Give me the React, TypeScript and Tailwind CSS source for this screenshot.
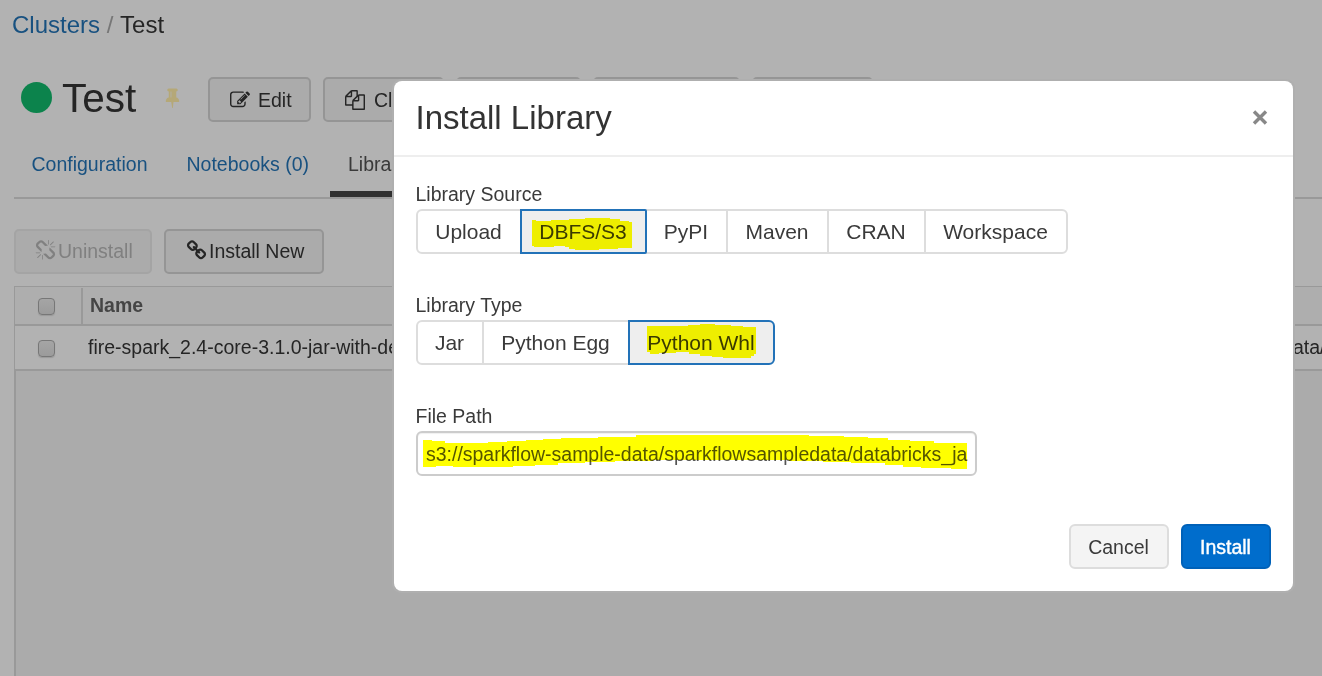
import React from "react";

const ICONS = {
  edit: "M888 1184l116-116-152-152-116 116v56h96v96h56zm440-720q-16-16-33 1l-350 350q-17 17-1 33t33-1l350-350q17-17 1-33zm80 594v190q0 119-84.5 203.5t-203.5 84.5h-832q-119 0-203.5-84.5t-84.5-203.5v-832q0-119 84.5-203.5t203.5-84.5h832q63 0 117 25 15 7 18 23 3 17-9 29l-49 49q-14 14-32 8-23-6-45-6h-832q-66 0-113 47t-47 113v832q0 66 47 113t113 47h832q66 0 113-47t47-113v-126q0-13 9-22l64-64q15-15 35-7t20 29zm-96-738l288 288-672 672h-288v-288zm444 132l-92 92-288-288 92-92q28-28 68-28t68 28l152 152q28 28 28 68t-28 68z",
  copy: "M1696 384q40 0 68 28t28 68v1216q0 40-28 68t-68 28h-960q-40 0-68-28t-28-68v-288h-544q-40 0-68-28t-28-68v-672q0-40 20-88t48-76l408-408q28-28 76-48t88-20h416q40 0 68 28t28 68v328q68-40 128-40h416zm-544 213l-299 299h299v-299zm-640-384l-299 299h299v-299zm196 647l316-316v-416h-384v416q0 40-28 68t-68 28h-416v640h512v-256q0-40 20-88t48-76zm956 804v-1152h-384v416q0 40-28 68t-68 28h-416v640h896z",
  pin: "M800 864v-448q0-14-9-23t-23-9-23 9-9 23v448q0 14 9 23t23 9 23-9 9-23zm672 352q0 26-19 45t-45 19h-429l-51 483q-2 12-10.5 20.5t-20.5 8.5h-1q-27 0-32-27l-76-485h-404q-26 0-45-19t-19-45q0-123 78.5-221.5t177.5-98.5v-512q-52 0-90-38t-38-90 38-90 90-38h640q52 0 90 38t38 90-38 90-90 38v512q99 0 177.5 98.5t78.5 221.5z",
  link: "M1520 1216q0-40-28-68l-208-208q-28-28-68-28-42 0-72 32 3 3 19 18.5t21.5 21.5 15 19 13 25.5 3.5 27.5q0 40-28 68t-68 28q-15 0-27.5-3.5t-25.5-13-19-15-21.5-21.5-18.5-19q-33 31-33 73 0 40 28 68l206 207q27 27 68 27 40 0 68-26l147-146q28-28 28-67zm-703-705q0-40-28-68l-206-207q-28-28-68-28-39 0-68 27l-147 146q-28 28-28 67 0 40 28 68l208 208q27 27 68 27 42 0 72-31-3-3-19-18.5t-21.5-21.5-15-19-13-25.5-3.5-27.5q0-40 28-68t68-28q15 0 27.5 3.5t25.5 13 19 15 21.5 21.5 18.5 19q33-31 33-73zm895 705q0 120-85 203l-147 146q-83 83-203 83-121 0-204-85l-206-207q-83-83-83-203 0-123 88-209l-88-88q-86 88-208 88-120 0-204-84l-208-208q-84-84-84-204t85-203l147-146q83-83 203-83 121 0 204 85l206 207q83 83 83 203 0 123-88 209l88 88q86-88 208-88 120 0 204 84l208 208q84 84 84 204z",
  unlink: "M503 1271l-256 256q-10 9-23 9-12 0-23-9-9-10-9-23t9-23l256-256q10-9 23-9t23 9q9 10 9 23t-9 23zm169 41v320q0 14-9 23t-23 9-23-9-9-23v-320q0-14 9-23t23-9 23 9 9 23zm-224-224q0 14-9 23t-23 9h-320q-14 0-23-9t-9-23 9-23 23-9h320q14 0 23 9t9 23zm1264 128q0 120-85 203l-147 146q-83 83-203 83-121 0-204-85l-334-335q-21-21-42-56l239-18 273 274q28 28 68 27.5t68-27.5l147-146q28-28 28-67 0-40-28-68l-274-275 18-239q35 21 56 42l336 336q84 86 84 204zm-617-724l-239 18-273-274q-28-28-68-28-39 0-68 27l-147 146q-28 28-28 67 0 40 28 68l274 274-18 240q-35-21-56-42l-336-336q-84-86-84-204 0-120 85-203l147-146q83-83 203-83 121 0 204 85l334 335q21 21 42 56zm633 84q0 14-9 23t-23 9h-320q-14 0-23-9t-9-23 9-23 23-9h320q14 0 23 9t9 23zm-544-544v320q0 14-9 23t-23 9-23-9-9-23v-320q0-14 9-23t23-9 23 9 9 23zm407 151l-256 256q-11 9-23 9t-23-9q-9-10-9-23t9-23l256-256q10-9 23-9t23 9q9 10 9 23t-9 23z",
};

function Icon({ name, className }: { name: keyof typeof ICONS; className: string }) {
  return (
    <svg viewBox="0 0 1792 1792" fill="currentColor" className={`shrink-0 ${className}`} aria-hidden="true">
      <path d={ICONS[name]} />
    </svg>
  );
}

function PageButton({ className, children }: { className: string; children?: React.ReactNode }) {
  return (
    <button className={`flex h-[45px] shrink-0 items-center rounded-[5px] border-2 bg-[#ababab] whitespace-nowrap ${className}`}>
      {children}
    </button>
  );
}

function Checkbox({ className = "" }: { className?: string }) {
  return (
    <span className={`block size-[17px] shrink-0 rounded-[4px] border-[1.5px] border-[#777] bg-linear-to-b from-[#a5a5a5] to-[#9b9b9b] shadow-[0_1px_1px_#999] ${className}`} />
  );
}

/* Felt-pen stroke laid over a label; multiplies with whatever is below. */
function Marker({ points, className, viewBox }: { points: string; className: string; viewBox: string }) {
  return (
    <svg viewBox={viewBox} className={`pointer-events-none absolute mix-blend-multiply ${className}`} shapeRendering="crispEdges" aria-hidden="true">
      <polygon points={points} fill="#ffff00" />
    </svg>
  );
}

const seg = "relative flex h-[45px] items-center justify-center border-2 pr-px text-[21px] whitespace-nowrap";
const idle = "border-[#ddd] bg-white";
const active = "z-10 border-[#2272b8] bg-[#eee]";

export default function App() {
  return (
    <div className="relative h-[676px] w-[1322px] overflow-hidden bg-[#b2b2b2] font-['Liberation_Sans',Arial,sans-serif] text-[19.5px] leading-[30px] text-[#252525]">
      <nav className="flex h-[50px] items-center pl-3 text-[24px] whitespace-pre">
        <span className="text-[#185180]">Clusters</span>
        <span className="text-[#777]"> / </span>
        <span>Test</span>
      </nav>

      <header className="flex h-[95px] pt-[27px] pl-[21px]">
        <span className="mt-[5px] size-[31px] shrink-0 rounded-full bg-[#0c834c]" />
        <h1 className="ml-[10px] w-[100px] text-[40.5px] leading-[42px]">Test</h1>
        <Icon name="pin" className="mt-[10px] size-[21px] text-[#b5a877]" />
        <div className="ml-[25px] flex gap-3">
          <PageButton className="w-[103px] border-[#959595] pl-[20px]">
            <Icon name="edit" className="mr-[8px] size-[20px]" />
            Edit
          </PageButton>
          <PageButton className="w-[121px] border-[#959595] pl-[20px]">
            <Icon name="copy" className="mr-[9px] size-[20px]" />
            Cl
          </PageButton>
          <PageButton className="w-[125px] border-[#959595]" />
          <PageButton className="w-[147px] border-[#959595]" />
          <PageButton className="w-[121px] border-[#959595]" />
        </div>
      </header>

      <div className="ml-[14px] flex h-[54px] border-b-2 border-[#999]">
        <span className="w-[155px] pt-[4px] pl-[17.5px] text-[#185180]">Configuration</span>
        <span className="w-[161px] pt-[4px] pl-[17.5px] text-[#185180]">Notebooks (0)</span>
        <span className="w-[110px] border-b-[6px] border-[#303030] pt-[4px] pl-[18px] text-[#3a3a3a]">Libra</span>
      </div>

      <div className="mt-[30px] ml-[14px] flex gap-3">
        <PageButton className="w-[138px] border-[#a4a4a4] pb-[2px] pl-[19px] text-[#808080]">
          <Icon name="unlink" className="mr-[2px] size-[21px]" />
          Uninstall
        </PageButton>
        <PageButton className="w-[160px] border-[#959595] pb-[2px] pl-[20px]">
          <Icon name="link" className="mr-[2px] size-[21px]" />
          Install New
        </PageButton>
      </div>

      <section className="mt-[12px] ml-[14px] border-t border-l border-[#999]">
        <div className="flex h-[39px] border-b-2 border-[#999] bg-[#aeaeae]">
          <div className="mt-px flex w-[68px] items-center border-r-2 border-[#999] pl-[23px]">
            <Checkbox />
          </div>
          <span className="pt-[3px] pl-[7px] font-bold text-[#454545]">Name</span>
        </div>
        <div className="flex h-[45px] items-center justify-between border-b-2 border-[#999] pl-[23px]">
          <div className="flex items-center">
            <Checkbox className="mt-[2px]" />
            <span className="mb-[2px] ml-[33px] whitespace-nowrap">fire-spark_2.4-core-3.1.0-jar-with-de</span>
          </div>
          <span className="mb-[2px] w-[29px]">ata/</span>
        </div>
        <div className="h-[310px] border-l border-[#999] bg-[#ababab]" />
      </section>

      <div role="dialog" className="absolute top-[79px] left-[392px] h-[514px] w-[903px] rounded-[9px] bg-[#afafaf] p-[2px] text-[#3a3a3a]">
        <div className="flex h-full flex-col rounded-[8px] bg-white">
          <div className="flex h-[76px] items-center justify-between border-b-2 border-[#eee] pr-[25px] pl-[21.5px]">
            <h2 className="text-[33px] leading-[40px] text-[#333]">Install Library</h2>
            <svg viewBox="0 0 16 16" className="size-[16px]" fill="none" stroke="#888" strokeWidth="3.4" aria-hidden="true">
              <path d="M2 1.5l12 12M14 1.5l-12 12" />
            </svg>
          </div>

          <div className="px-[22px] pt-[22px]">
            <label className="-ml-[0.5px] block h-[30px]">Library Source</label>
            <div className="flex">
              <button className={`${seg} ${idle} w-[106px] rounded-l-[6px]`}>Upload</button>
              <button className={`${seg} ${active} -ml-[2px] w-[127px] rounded-r-[2px]`}>
                DBFS/S3
                <Marker className="top-[7px] left-[10px] h-[32px] w-[100px]" viewBox="0 0 100 32" points="0,2 4,2 4,3 19,3 19,2 37,2 37,1 53,1 53,0 78,0 78,1 88,1 88,3 97,3 97,4 100,4 100,30 86,30 86,31 67,31 67,32 43,32 43,31 37,31 37,29 33,29 33,28 22,28 22,29 2,29 2,28 0,28" />
              </button>
              <button className={`${seg} ${idle} -ml-[2px] w-[83px]`}>PyPI</button>
              <button className={`${seg} ${idle} -ml-[2px] w-[103px]`}>Maven</button>
              <button className={`${seg} ${idle} -ml-[2px] w-[99px]`}>CRAN</button>
              <button className={`${seg} ${idle} -ml-[2px] w-[144px] rounded-r-[6px]`}>Workspace</button>
            </div>

            <label className="mt-[36px] -ml-[0.5px] block h-[30px]">Library Type</label>
            <div className="flex">
              <button className={`${seg} ${idle} w-[68px] rounded-l-[6px]`}>Jar</button>
              <button className={`${seg} ${idle} -ml-[2px] w-[148px]`}>Python Egg</button>
              <button className={`${seg} ${active} -ml-[2px] w-[147px] rounded-r-[6px]`}>
                Python Whl
                <Marker className="top-[2px] left-[17px] h-[34px] w-[109px]" viewBox="0 0 109 34" points="0,2 41,2 41,1 53,1 53,0 68,0 68,1 84,1 84,2 96,2 96,3 109,3 109,30 107,30 107,32 104,32 104,34 76,34 76,33 65,33 65,32 53,32 53,30 42,30 42,28 29,28 29,29 12,29 12,30 3,30 3,28 0,28" />
              </button>
            </div>

            <label className="mt-[36px] -ml-[0.5px] block h-[30px]">File Path</label>
            <div className="relative flex h-[45px] w-[561px] items-center rounded-[6px] border-2 border-[#ccc] px-[8px] text-[#555] shadow-[inset_0_1px_1px_#f0f0f0]">
              <span className="whitespace-nowrap tracking-[-0.01px]">s3://sparkflow-sample-data/sparkflowsampledata/databricks_ja</span>
              <Marker className="top-[2px] left-[5px] h-[35px] w-[544px]" viewBox="0 0 544 35" points="0,5 9,5 9,6 22,6 22,8 65,8 65,7 84,7 84,6 103,6 103,5 120,5 120,4 138,4 138,3 175,3 175,2 213,2 213,0 386,0 386,1 421,1 421,2 445,2 445,3 465,3 465,5 487,5 487,6 511,6 511,8 544,8 544,34 528,34 528,33 498,33 498,32 480,32 480,30 462,30 462,28 428,28 428,27 400,27 400,26 366,26 366,25 230,25 230,26 192,26 192,27 162,27 162,28 135,28 135,30 112,30 112,31 90,31 90,32 30,32 30,31 13,31 13,32 0,32" />
            </div>
          </div>

          <div className="mt-auto mb-[22px] flex justify-end gap-3 pr-[22px]">
            <button className="h-[45px] w-[100px] rounded-[6px] border-2 border-[#ddd] bg-[#f4f4f4] pr-px">Cancel</button>
            <button className="h-[45px] w-[90px] rounded-[6px] border-2 border-[#0061b8] bg-[#006dcc] pr-px text-white [-webkit-text-stroke:0.4px_white]">Install</button>
          </div>
        </div>
      </div>
    </div>
  );
}
